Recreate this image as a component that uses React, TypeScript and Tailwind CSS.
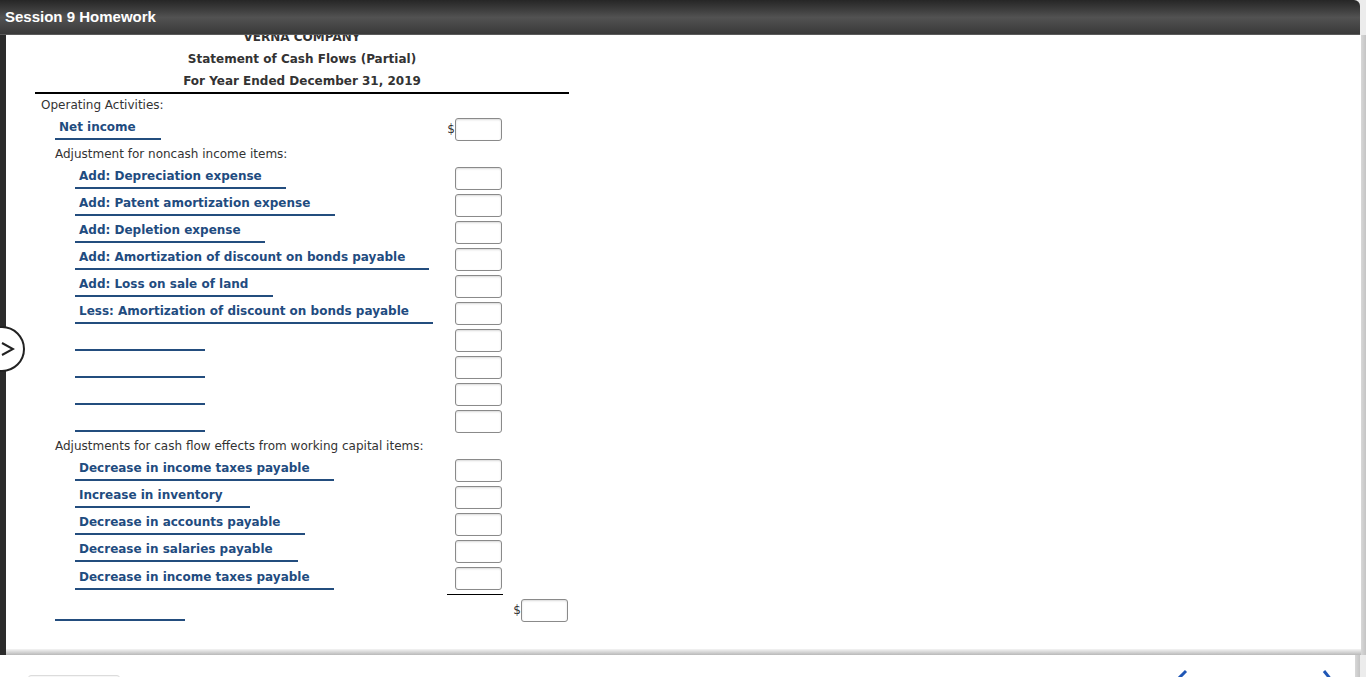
import React from "react";

type Row = { label: string; w: string };

const noncash: Row[] = [
  { label: "Add: Depreciation expense", w: "w-[211px]" },
  { label: "Add: Patent amortization expense", w: "w-[260px]" },
  { label: "Add: Depletion expense", w: "w-[190px]" },
  { label: "Add: Amortization of discount on bonds payable", w: "w-[354px]" },
  { label: "Add: Loss on sale of land", w: "w-[198px]" },
  { label: "Less: Amortization of discount on bonds payable", w: "w-[358px]" },
  { label: "", w: "w-[130px]" },
  { label: "", w: "w-[130px]" },
  { label: "", w: "w-[130px]" },
  { label: "", w: "w-[130px]" },
];

const working: Row[] = [
  { label: "Decrease in income taxes payable", w: "w-[259px]" },
  { label: "Increase in inventory", w: "w-[175px]" },
  { label: "Decrease in accounts payable", w: "w-[230px]" },
  { label: "Decrease in salaries payable", w: "w-[223px]" },
  { label: "Decrease in income taxes payable", w: "w-[259px]" },
];

function Box() {
  return (
    <div className="h-[23px] w-[47px] rounded-[3px] border border-[#8a8a8a] bg-white shadow-[inset_0_1px_2px_rgba(0,0,0,0.15)]" />
  );
}

function Label({ text, w }: { text: string; w: string }) {
  return (
    <div
      className={`${w} h-[22px] border-b-2 border-[#234d7e] pl-[4px] text-[12px] font-bold leading-[18px] text-[#1f4c80] whitespace-nowrap`}
    >
      {text}
    </div>
  );
}

function ItemRow({ row, indent, dollar }: { row: Row; indent: string; dollar?: boolean }) {
  return (
    <div className="flex h-[27px] items-start">
      <div className={`w-[410px] ${indent}`}>
        <Label text={row.label} w={row.w} />
      </div>
      <span className="w-[10px] text-right text-[12px] leading-[23px] text-[#333]">{dollar ? "$" : ""}</span>
      <Box />
    </div>
  );
}

export default function App() {
  return (
    <div
      className="relative h-[677px] w-[1366px] overflow-hidden bg-[#ececec]"
      style={{ fontFamily: '"DejaVu Sans", Verdana, sans-serif' }}
    >
      {/* title bar */}
      <div className="flex h-[35px] w-[1360px] items-center rounded-tr-[6px] bg-gradient-to-b from-[#262626] via-[#525252] to-[#383838] pl-[5px] shadow-[inset_0_-1px_0_#5a5a5a]">
        <span
          className="text-[15px] font-bold text-white"
          style={{ fontFamily: '"Liberation Sans", Arial, sans-serif' }}
        >
          Session 9 Homework
        </span>
      </div>

      <div className="flex h-[620px]">
        <div className="w-[6px] bg-[#2b2b2b]" />
        <div className="flex flex-1 flex-col bg-white">
          <div className="flex-1 overflow-hidden">
            <div className="ml-[29px] mt-[-9px] w-[534px] text-[#333]">
              <div className="text-center text-[12px] font-bold leading-[22px]">
                <div>VERNA COMPANY</div>
                <div>Statement of Cash Flows (Partial)</div>
                <div>For Year Ended December 31, 2019</div>
              </div>
              <div className="h-[2px] bg-black" />

              <div className="mt-[2px] pl-[6px] text-[12px] leading-[18px]">Operating Activities:</div>
              <div className="mt-[4px]">
                <ItemRow row={{ label: "Net income", w: "w-[106px]" }} indent="pl-[20px]" dollar />
              </div>
              <div className="pl-[20px] text-[12px] leading-[18px]">Adjustment for noncash income items:</div>
              <div className="mt-[4px]">
                {noncash.map((r, i) => (
                  <ItemRow key={i} row={r} indent="pl-[40px]" />
                ))}
              </div>
              <div className="pl-[20px] text-[12px] leading-[18px]">
                Adjustments for cash flow effects from working capital items:
              </div>
              <div className="mt-[4px]">
                {working.slice(0, 4).map((r, i) => (
                  <ItemRow key={i} row={r} indent="pl-[40px]" />
                ))}
                <ItemRow row={working[4]} indent="pl-[40px] pt-[1px]" />
              </div>
              <div className="ml-[412px] w-[56px] border-t border-black" />
              <div className="mt-[4px] flex h-[27px] items-start">
                <div className="w-[476px] pl-[20px]">
                  <Label text="" w="w-[130px]" />
                </div>
                <span className="w-[10px] text-right text-[12px] leading-[23px]">$</span>
                <Box />
              </div>
            </div>
          </div>
          <div className="h-[6px] bg-gradient-to-b from-[#f4f4f4] to-[#b9b9b9]" />
        </div>
        <div className="w-[5px] bg-gradient-to-r from-[#d8d8d8] to-[#c4c4c4]" />
      </div>

      {/* footer strip */}
      <div className="relative flex h-[22px] w-[1360px]">
        <div className="flex-1 bg-white">
          <div className="ml-[28px] mt-[20px] h-[4px] w-[92px] rounded-t-[3px] border border-[#dcdcdc] bg-[#f6f6f6]" />
        </div>
        <div className="w-[5px] bg-gradient-to-r from-[#d8d8d8] to-[#c4c4c4]" />
        <svg className="absolute left-[1172px] top-[14px]" width="18" height="20" viewBox="0 0 18 20">
          <path d="M14 2 L4 12" stroke="#1f56b5" strokeWidth="3" fill="none" />
        </svg>
        <svg className="absolute left-[1318px] top-[14px]" width="18" height="20" viewBox="0 0 18 20">
          <path d="M6 2 L14 12" stroke="#1f56b5" strokeWidth="3" fill="none" />
        </svg>
      </div>

      {/* collapse handle */}
      <div className="absolute left-[-21px] top-[326px] flex h-[46px] w-[46px] items-center justify-end rounded-full border-2 border-[#222] bg-white pr-[8px]">
        <svg width="14" height="16" viewBox="0 0 14 16">
          <path d="M1 2 L12 8 L1 14" stroke="#222" strokeWidth="2" fill="none" />
        </svg>
      </div>
    </div>
  );
}
